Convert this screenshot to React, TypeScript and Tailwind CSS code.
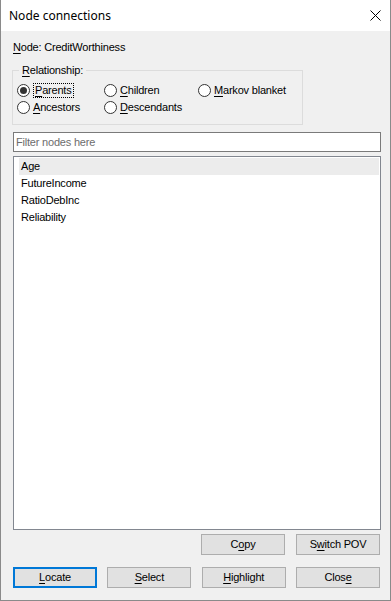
import type { ReactNode } from "react";

const FONT = { fontFamily: '"Liberation Sans", Arial, sans-serif' };

function Key({ children }: { children: ReactNode }) {
  return <span className="underline underline-offset-[2px]">{children}</span>;
}

function Radio({ checked, focus, children }: { checked?: boolean; focus?: boolean; children: ReactNode }) {
  return (
    <div className="flex h-[17px] items-center">
      <div className="flex h-[13px] w-[13px] items-center justify-center rounded-full border border-[#333333] bg-white">
        {checked && <div className="h-[7px] w-[7px] rounded-full bg-[#333333]" />}
      </div>
      <span
        className={
          focus
            ? "ml-[3px] border border-dotted border-black px-[1px] leading-[13px]"
            : "ml-[1px] border border-transparent px-[1px] leading-[13px]"
        }
      >
        {children}
      </span>
    </div>
  );
}

function Btn({ primary, children }: { primary?: boolean; children: ReactNode }) {
  return (
    <button
      className={
        primary
          ? "h-[21px] w-[84px] border-2 border-[#0078d7] bg-[#e1e1e1] text-[11px] text-black"
          : "h-[21px] w-[84px] border border-[#adadad] bg-[#e1e1e1] text-[11px] text-black"
      }
    >
      {children}
    </button>
  );
}

const ITEMS = ["Age", "FutureIncome", "RatioDebInc", "Reliability"];

export default function App() {
  return (
    <div
      className="flex h-[601px] w-[391px] flex-col border-x border-b border-[#8a8a8a] bg-[#f0f0f0] text-[11px] tracking-[-0.2px] text-black"
      style={FONT}
    >
      {/* title bar */}
      <div className="flex h-[31px] shrink-0 items-center justify-between bg-white pl-[8px] pr-[9px]">
        <span
          className="text-[12px] leading-none tracking-normal"
          style={{ fontFamily: '"Noto Sans", "Open Sans", sans-serif' }}
        >
          Node connections
        </span>
        <svg width="11" height="11" viewBox="0 0 11 11" className="mb-[1px]">
          <path d="M0.5 0.5 L10.5 10.5 M10.5 0.5 L0.5 10.5" stroke="#000" strokeWidth="1" />
        </svg>
      </div>

      <div className="flex flex-1 flex-col px-[11px]">
        <div className="mt-[10px] h-[13px] pl-[1px] leading-[13px]">
          <Key>N</Key>ode: CreditWorthiness
        </div>

        {/* group box */}
        <div className="relative mt-[16px] h-[55px] w-[291px] border border-[#dcdcdc] pl-[4px] pt-[11px]">
          <span className="absolute -top-[7px] left-[6px] bg-[#f0f0f0] px-[3px] leading-[13px]">
            <Key>R</Key>elationship:
          </span>
          <div className="grid grid-cols-[87px_94px_auto]">
            <Radio checked focus>
              <Key>P</Key>arents
            </Radio>
            <Radio>
              <Key>C</Key>hildren
            </Radio>
            <Radio>
              <Key>M</Key>arkov blanket
            </Radio>
            <Radio>
              <Key>A</Key>ncestors
            </Radio>
            <Radio>
              <Key>D</Key>escendants
            </Radio>
          </div>
        </div>

        {/* filter */}
        <div className="ml-[1px] mt-[7px] flex h-[20px] w-[368px] items-center border border-[#7a7a7a] bg-white pl-[2px] text-[#6d6d6d]">
          Filter nodes here
        </div>

        {/* list */}
        <div className="ml-[1px] mt-[4px] flex h-[374px] w-[368px] flex-col border border-[#828790] bg-white pl-[5px] pr-[1px] pt-[1px]">
          {ITEMS.map((it, i) => (
            <div
              key={it}
              className={
                i === 0
                  ? "flex h-[17px] items-center bg-[#ececec] pl-[2px]"
                  : "flex h-[17px] items-center pl-[2px]"
              }
            >
              {it}
            </div>
          ))}
        </div>

        <div className="ml-[1px] mt-[4px] flex w-[368px] justify-end gap-[11px] pr-[1px]">
          <Btn>
            C<Key>o</Key>py
          </Btn>
          <Btn>
            S<Key>w</Key>itch POV
          </Btn>
        </div>

        <div className="ml-[1px] mt-[12px] flex w-[367px] justify-between">
          <Btn primary>
            <Key>L</Key>ocate
          </Btn>
          <Btn>
            <Key>S</Key>elect
          </Btn>
          <Btn>
            <Key>H</Key>ighlight
          </Btn>
          <Btn>
            Clos<Key>e</Key>
          </Btn>
        </div>
      </div>
    </div>
  );
}
